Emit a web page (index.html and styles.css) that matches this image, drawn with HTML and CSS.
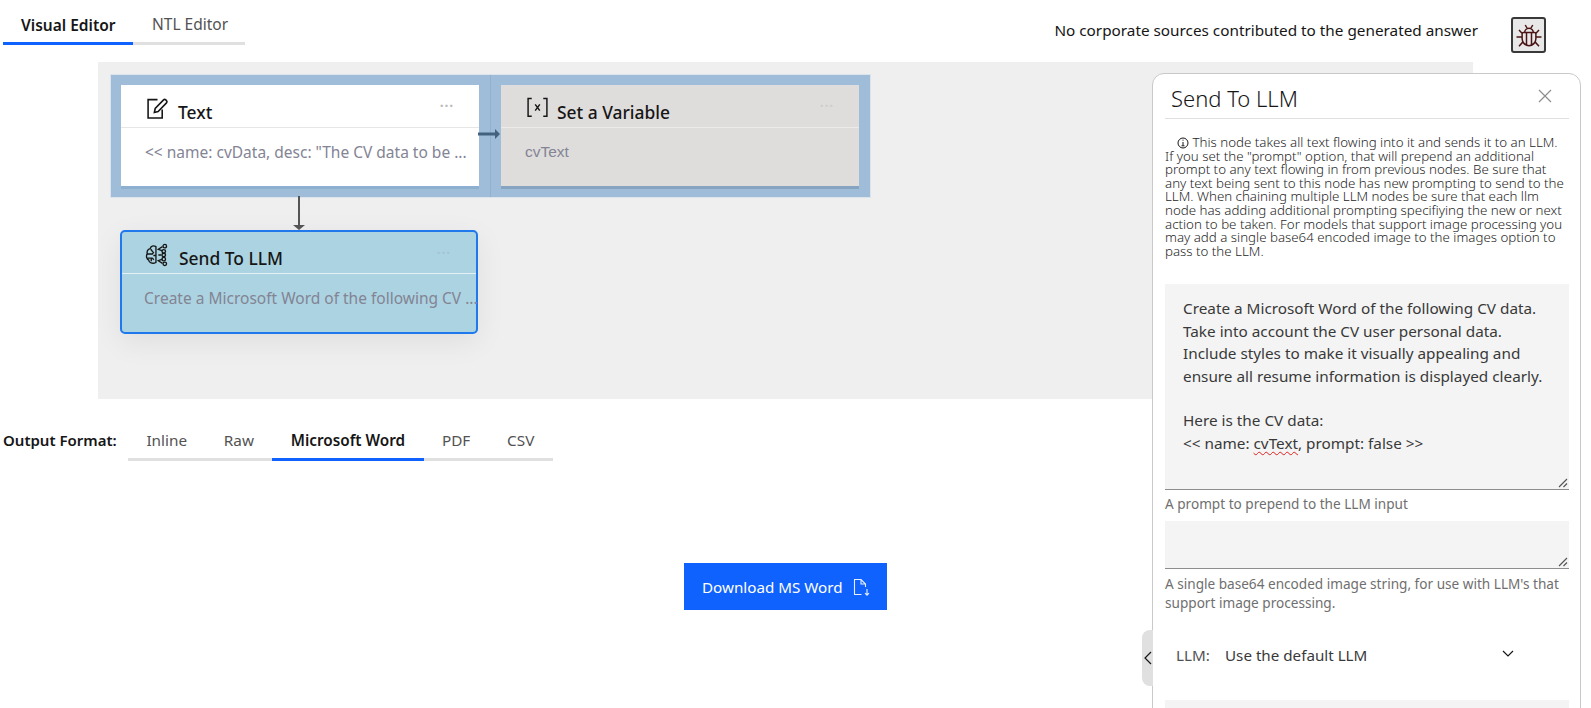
FILE: index.html
```html
<!DOCTYPE html>
<html lang="en">
<head>
<meta charset="utf-8">
<title>Send To LLM</title>
<link rel="stylesheet" href="styles.css">
</head>
<body>
<div class="page">
  <header class="topbar">
    <nav class="tabs editor-tabs">
      <a class="tab active">Visual Editor</a>
      <a class="tab">NTL Editor</a>
    </nav>
    <div class="top-right">
      <span class="sources">No corporate sources contributed to the generated answer</span>
      <button class="bug">
        <svg viewBox="0 0 24 24" width="30" height="30" fill="none" stroke="#4a1414" stroke-width="1.200"><path d="M7.500 10h9a1 1 0 0 1 1 1v4a5.500 5.500 0 0 1-11 0v-4a1 1 0 0 1 1-1zM8.500 10a3.500 3.500 0 0 1 7 0M9 4l1.600 2.800M15 4l-1.600 2.800M10 10v10M14 10v10M6.500 13.500H2M17.500 13.500h4.500M6.800 11 4 8M17.200 11 20 8M7.200 17.500 4 21M16.800 17.500 20 21"/></svg>
      </button>
    </div>
  </header>

  <section class="canvas">
    <div class="selection"><i class="sel-line"></i></div>

    <article class="node node-text">
      <div class="node-head">
        <svg class="node-icon" viewBox="0 0 22 22" fill="none" stroke="#161616" stroke-width="1.500"><path d="M11 2.500H2v17.500h13.500V12"/><path d="M8 14.800l.8-3.800 8-8.200a1.500 1.500 0 0 1 2.100 0l.7.7a1.500 1.500 0 0 1 0 2.100l-8 8.200z"/></svg>
        <span class="node-title">Text</span>
        <span class="dots">···</span>
      </div>
      <p class="node-body">&lt;&lt; name: cvData, desc: "The CV data to be ...</p>
    </article>

    <article class="node node-var">
      <div class="node-head">
        <svg class="node-icon" viewBox="0 0 22 22" fill="none" stroke="#161616" stroke-width="1.400"><path d="M5.500 1.500H2v17h3.500M16.500 1.500H20v17h-3.500M8.800 7l4.400 6M13.200 7l-4.400 6"/></svg>
        <span class="node-title">Set a Variable</span>
        <span class="dots">···</span>
      </div>
      <p class="node-body node-body-arial">cvText</p>
    </article>

    <article class="node node-llm">
      <div class="node-head">
        <svg class="node-icon" viewBox="0 0 24 22" fill="none" stroke="#161616" stroke-width="1.300"><path d="M10.500 3C8 1.500 5.500 2.500 5 4.800 2.800 5.300 1.500 7.500 2.200 9.800 .8 11.800 1.500 15 3.500 15.800c.3 2.500 3.500 4.200 7 2.400zM10.500 3v15.200M2.500 10H7l1.500-2M5.500 5.500 7.500 8M2.500 14H7l1.500 1.500M6 14v3M8 11.500h2.500M12.800 11h3M16.800 7l-4-1.500L16.800 3M16.800 15l-4 1.500 4 2.500"/><circle cx="19" cy="2.500" r="1.700"/><circle cx="18" cy="7.500" r="1.700"/><circle cx="18" cy="11" r="1.700"/><circle cx="18" cy="15" r="1.700"/><circle cx="19" cy="19.500" r="1.700"/></svg>
        <span class="node-title">Send To LLM</span>
        <span class="dots">···</span>
      </div>
      <p class="node-body">Create a Microsoft Word of the following CV ...</p>
    </article>

    <svg class="edge edge-h" viewBox="0 0 22 10" width="22" height="10"><path d="M0 3.500h17V0l5 5-5 5V6.500H0z" fill="#42627f"/></svg>
    <svg class="edge edge-v" viewBox="0 0 12 34" width="12" height="34"><path d="M5 0h2v29h5l-6 5-6-5h5z" fill="#555"/></svg>
  </section>

  <div class="format-row">
    <span class="format-label">Output Format:</span>
    <nav class="tabs format-tabs">
      <a class="tab">Inline</a>
      <a class="tab">Raw</a>
      <a class="tab active">Microsoft Word</a>
      <a class="tab">PDF</a>
      <a class="tab">CSV</a>
    </nav>
  </div>

  <div class="download-row">
    <button class="download">Download MS Word
      <svg viewBox="0 0 18 20" width="18" height="20" fill="none" stroke="#fff" stroke-width="1.100" opacity=".9"><path d="M9.500 17.500H2.500v-15h6.500l4.500 4.500v3M9 2.500V7h4.500M15 12v6M13 16.200l2 2 2-2"/></svg>
    </button>
  </div>

  <aside class="panel">
    <span class="handle"><svg viewBox="0 0 8 14" width="8" height="14" fill="none" stroke="#161616" stroke-width="1.200"><path d="M7 1 1 7l6 6"/></svg></span>
    <div class="panel-head">
      <h2 class="panel-title">Send To LLM</h2>
      <svg class="close" viewBox="0 0 14 14" width="14" height="14" stroke="#8d8d8d" stroke-width="1.200"><path d="M1 1l12 12M13 1 1 13"/></svg>
    </div>
    <p class="desc"><span class="indent"></span><svg class="info" viewBox="0 0 12 12" width="12" height="12" fill="none" stroke="#161616"><circle cx="6" cy="6" r="5"/><path d="M6 5v3.500M4.500 8.800h3M5.500 3.200h1"/></svg> This node takes all text flowing into it and sends it to an LLM.<br>If you set the "prompt" option, that will prepend an additional<br>prompt to any text flowing in from previous nodes. Be sure that<br>any text being sent to this node has new prompting to send to the<br>LLM. When chaining multiple LLM nodes be sure that each llm<br>node has adding additional prompting specifiying the new or next<br>action to be taken. For models that support image processing you<br>may add a single base64 encoded image to the images option to<br>pass to the LLM.</p>
    <div class="area area-main">
      <p class="area-text">Create a Microsoft Word of the following CV data.<br>Take into account the CV user personal data.<br>Include styles to make it visually appealing and<br>ensure all resume information is displayed clearly.<br><br>Here is the CV data:<br>&lt;&lt; name: <span class="spell">cvText</span>, prompt: false &gt;&gt;</p>
      <svg class="grip" viewBox="0 0 10 10" width="10" height="10" stroke="#525252" stroke-width="1.100"><path d="M1 9 9 1M5.500 9 9 5.500"/></svg>
    </div>
    <p class="helper">A prompt to prepend to the LLM input</p>
    <div class="area area-small">
      <svg class="grip" viewBox="0 0 10 10" width="10" height="10" stroke="#525252" stroke-width="1.100"><path d="M1 9 9 1M5.500 9 9 5.500"/></svg>
    </div>
    <p class="helper helper-2">A single base64 encoded image string, for use with LLM's that<br>support image processing.</p>
    <div class="select">
      <span class="select-label">LLM:</span>
      <span class="select-value">Use the default LLM</span>
      <svg class="chev" viewBox="0 0 12 8" width="12" height="8" fill="none" stroke="#161616" stroke-width="1.200"><path d="M1 1l5 5 5-5"/></svg>
    </div>
    <div class="area area-next"></div>
  </aside>
</div>
</body>
</html>
```
FILE: styles.css
```css
* { box-sizing: border-box; }
html, body { margin: 0; padding: 0; background: #fff; }
body { font-family: "Noto Sans", Roboto, sans-serif; color: #161616; }
.page { position: relative; width: 1591px; height: 708px; overflow: hidden; }

.topbar { display: flex; justify-content: space-between; height: 62px; padding-left: 3px; }
.tabs { display: flex; }
.tab { display: block; color: #525252; border-bottom: 3px solid #e0e0e0; white-space: nowrap; }
.tab.active { color: #161616; font-weight: 600; border-bottom-color: #0f62fe; }
.editor-tabs { height: 45px; }
.editor-tabs .tab { font-size: 15.500px; padding: 15px 0 0 18px; height: 45px; line-height: 20px; }
.editor-tabs .tab.active { width: 130px; }
.editor-tabs .tab:last-child { width: 112px; padding-left: 19px; padding-top: 14px; }

.top-right { display: flex; align-items: flex-start; margin-right: 45px; }
.sources { font-size: 15.300px; line-height: 20px; margin-top: 20px; color: #161616; }
.bug { width: 35px; height: 36px; margin: 17px 0 0 33px; padding: 0; border: 2px solid #393939; border-radius: 3px; background: #e8e8e8; display: flex; align-items: center; justify-content: center; }

.canvas { position: relative; margin-left: 98px; width: 1375px; height: 337px; background: #efefef; }
.selection { position: absolute; left: 12px; top: 12px; width: 761px; height: 124px; background: #9fbdd9; border: 1px solid #dbe4ec; }
.sel-line { position: absolute; left: 379px; top: 0; bottom: 0; width: 1px; background: #8fb1d2; }
.node { position: absolute; width: 358px; height: 101px; background: #fff; box-shadow: 0 3px 0 rgba(120,160,200,.45); }
.node-text { left: 23px; top: 23px; }
.node-var { left: 403px; top: 23px; background: #dfdddc; box-shadow: 0 3px 0 rgba(110,140,170,.5); }
.node-llm { left: 22px; top: 168px; width: 358px; height: 104px; background: #acd3e1; border: 2px solid #1f78ec; border-radius: 5px; box-shadow: 0 8px 30px rgba(0,0,0,.07); }
.node-head { display: flex; align-items: center; height: 43px; border-bottom: 1px solid #e6e6e6; padding-left: 25px; position: relative; }
.node-llm .node-head { height: 42px; border-bottom-color: #e4f0f4; padding-left: 23px; }
.node-var .node-head { border-bottom-color: #eceaea; }
.node-icon { width: 23px; height: 23px; flex: none; margin-top: 5px; }
.node-llm .node-icon { width: 25px; height: 24px; margin-top: 4px; }
.node-title { font-size: 17.400px; font-weight: 500; margin-left: 9px; margin-top: 12px; color: #161616; white-space: nowrap; }
.node-var .node-title { margin-left: 8px; }
.node-llm .node-title { margin-top: 10px; }
.dots { position: absolute; right: 25px; top: 13px; font-size: 14px; line-height: 16px; color: #bbb; letter-spacing: .8px; font-weight: 700; }
.node-llm .dots { color: #a3c6d4; right: 25px; top: 13px; }
.node-var .dots { color: #cfcdcd; }
.node-body { margin: 0; padding: 14px 0 0 24px; font-size: 15.500px; line-height: 20px; color: #838494; white-space: nowrap; }
.node-llm .node-body { padding-left: 22px; }
.node-body-arial { font-family: "Liberation Sans", Arial, sans-serif; font-size: 15.500px; }
.edge { position: absolute; }
.edge-h { left: 380px; top: 67px; }
.edge-v { left: 195px; top: 134px; }

.format-row { display: flex; align-items: flex-start; padding: 28px 0 0 3px; height: 101px; }
.format-label { font-size: 15px; font-weight: 600; line-height: 20px; margin-top: 3px; width: 125px; white-space: nowrap; }
.format-tabs { height: 34px; }
.format-tabs .tab { font-size: 15.300px; height: 34px; line-height: 20px; padding: 3px 18.400px 0; }

.download-row { padding-left: 684px; margin-top: 63px; }
.download { display: flex; align-items: center; gap: 9px; width: 203px; height: 47px; padding: 0 0 0 18px; border: 0; background: #0f62fe; color: #fff; font: inherit; font-size: 15.200px; white-space: nowrap; }

.panel { position: absolute; left: 1152px; top: 73px; width: 429px; height: 660px; background: #fff; border: 1px solid #c9c9c9; border-radius: 12px 12px 0 0; padding: 0 11px 0 12px; }
.handle { position: absolute; left: -11px; top: 556px; width: 11px; height: 56px; background: #e0e0e0; border-radius: 8px 0 0 8px; display: flex; align-items: center; justify-content: center; }
.panel-head { position: relative; height: 45px; border-bottom: 1px solid #e0e0e0; padding-left: 6px; }
.panel-title { margin: 0; font-size: 22px; font-weight: 300; line-height: 30px; padding-top: 9px; color: #161616; }
.close { position: absolute; right: 17px; top: 15px; }
.desc { margin: 17px 0 0; font-size: 13.300px; font-weight: 300; line-height: 13.600px; color: #262626; white-space: nowrap; }
.indent { display: inline-block; width: 12px; }
.info { vertical-align: -2px; }
.area { position: relative; background: #f4f4f4; border-bottom: 1px solid #8d8d8d; }
.area-main { margin-top: 26px; height: 206px; padding: 13px 18px; }
.area-text { margin: 0; font-size: 15.300px; line-height: 22.400px; color: #393939; white-space: nowrap; }
.spell { text-decoration: underline wavy #e02020 1px; text-underline-offset: 2px; }
.grip { position: absolute; right: 1px; bottom: 1px; }
.helper { margin: 5px 0 0; font-size: 13.600px; line-height: 18px; color: #6f6f6f; white-space: nowrap; }
.area-small { margin-top: 8px; height: 48px; }
.helper-2 { margin-top: 5px; line-height: 19px; }
.select { display: flex; align-items: center; position: relative; height: 40px; margin-top: 23px; padding-left: 11px; font-size: 15.200px; color: #525252; }
.select-label { width: 49px; }
.select-value { color: #393939; }
.chev { position: absolute; left: 337px; top: 15px; }
.area-next { margin-top: 25px; height: 60px; border: 0; }
```
